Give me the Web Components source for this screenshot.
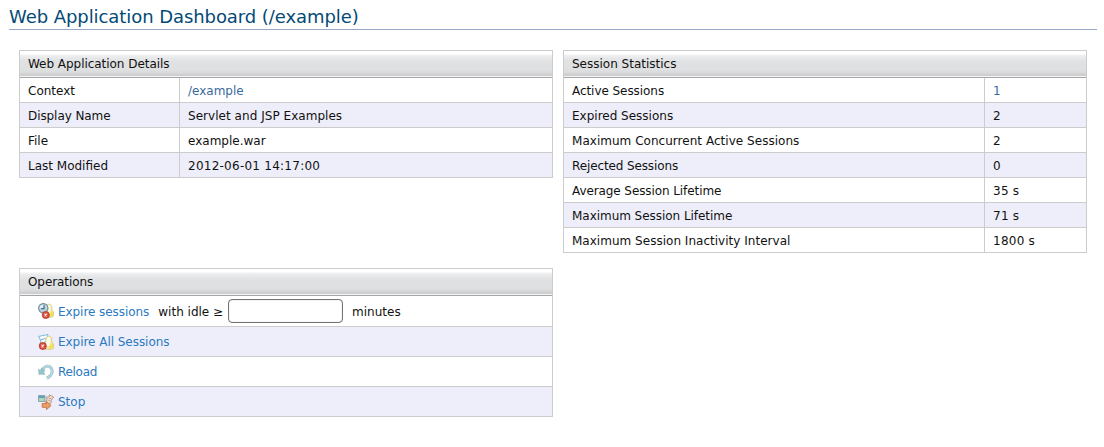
<!DOCTYPE html>
<html lang="en">
<head>
<meta charset="utf-8">
<title>Web Application Dashboard</title>
<style>
body{margin:0;background:#fff;color:#111;font:12px/16px "DejaVu Sans",sans-serif}
</style>
</head>
<body>
<dash-page heading="Web Application Dashboard (/example)">
  <dash-panel slot="details" heading="Web Application Details" style="--head-track:-.04px">
    <dash-row label="Context"><dash-link quiet>/example</dash-link></dash-row>
    <dash-row label="Display Name" style="--label-track:-.08px;--value-track:.04px">Servlet and JSP Examples</dash-row>
    <dash-row label="File">example.war</dash-row>
    <dash-row label="Last Modified" style="--value-track:.25px">2012-06-01 14:17:00</dash-row>
  </dash-panel>
  <dash-panel slot="stats" heading="Session Statistics" style="--label:421px">
    <dash-row label="Active Sessions" style="--label-track:-.06px"><dash-link quiet>1</dash-link></dash-row>
    <dash-row label="Expired Sessions">2</dash-row>
    <dash-row label="Maximum Concurrent Active Sessions" style="--label-track:.03px">2</dash-row>
    <dash-row label="Rejected Sessions" style="--label-track:-.12px">0</dash-row>
    <dash-row label="Average Session Lifetime" style="--label-track:-.09px;--value-track:.25px">35 s</dash-row>
    <dash-row label="Maximum Session Lifetime" style="--label-track:-.04px;--value-track:.25px">71 s</dash-row>
    <dash-row label="Maximum Session Inactivity Interval" style="--label-track:.02px;--value-track:.25px">1800 s</dash-row>
  </dash-panel>
  <dash-panel slot="ops" heading="Operations" style="--head-track:-.08px">
    <dash-op icon="clock" tall><dash-link style="letter-spacing:-.06px">Expire sessions</dash-link><dash-idle></dash-idle></dash-op>
    <dash-op icon="users"><dash-link style="letter-spacing:-.04px">Expire All Sessions</dash-link></dash-op>
    <dash-op icon="reload"><dash-link style="letter-spacing:-.3px">Reload</dash-link></dash-op>
    <dash-op icon="stop"><dash-link>Stop</dash-link></dash-op>
  </dash-panel>
</dash-page>
<script>
const attach = (el, html) => { el.attachShadow({mode:'open'}).innerHTML = html; };

customElements.define('dash-page', class extends HTMLElement {
  connectedCallback(){
    attach(this, `<style>
      :host{display:block;padding:4px 7px 0 9px}
      h1{margin:0;height:25px;font:18px/25px "DejaVu Sans",sans-serif;letter-spacing:-.07px;color:#044a75;border-bottom:1px solid #99a8c9;white-space:nowrap}
      .grid{display:grid;grid-template-columns:534px 524px;column-gap:10px;row-gap:15px;padding:20px 10px 0;align-items:start}
    </style><h1>${this.getAttribute('heading')}</h1>
    <div class="grid"><slot name="details"></slot><slot name="stats"></slot><slot name="ops"></slot></div>`);
  }
});

customElements.define('dash-panel', class extends HTMLElement {
  connectedCallback(){
    attach(this, `<style>
      :host{display:block;box-sizing:border-box;border:1px solid #ccc;border-bottom:0}
      header{box-sizing:border-box;height:27px;padding:5px 8px 0;border-bottom:1px solid #a6a6a8;letter-spacing:var(--head-track,0);
        background:linear-gradient(#fff 0,#fff 3px,#f1f1f2 4px,#e7e8e9 7px,#e0e1e3 11px,#dfe0e2 19px,#d8d9da 22px,#cecfd0 23.5px,#cfcfd0 25px,#f4f4f4 25px,#f4f4f4 26px)}
    </style><header>${this.getAttribute('heading')}</header><slot></slot>`);
  }
});

customElements.define('dash-row', class extends HTMLElement {
  connectedCallback(){
    attach(this, `<style>
      :host{display:grid;grid-template-columns:var(--label,160px) 1fr;height:24px;border-bottom:1px solid #ccc;line-height:26px}
      :host(:nth-child(even)){background:#eeeefa}
      span{box-sizing:border-box;height:24px;padding-left:8px;white-space:nowrap;letter-spacing:var(--value-track,0)}
      .label{border-right:1px solid #ccc;letter-spacing:var(--label-track,0)}
    </style><span class="label">${this.getAttribute('label')}</span><span><slot></slot></span>`);
  }
});

customElements.define('dash-link', class extends HTMLElement {
  connectedCallback(){
    attach(this, `<style>
      :host{display:inline;color:#2a7ac0;cursor:pointer}
      :host([quiet]){color:#3a6a9e}
    </style><slot></slot>`);
  }
});

customElements.define('dash-idle', class extends HTMLElement {
  connectedCallback(){
    attach(this, `<style>
      :host{display:flex;align-items:center;margin-left:9px;padding-top:2px}
      input{box-sizing:border-box;width:115px;height:24px;margin:-2px 9px 0 5px;padding:2px 4px;border:1px solid #73736f;border-radius:4px;background:#fff;font:inherit;box-shadow:inset 0 0 1px #999}
    </style><span>with idle ≥</span><input type="text" aria-label="Idle minutes"><span>minutes</span>`);
  }
});

const person = `
  <path d="M8 4.200C8.500 1.800 9.900 1 11.300 1.300c2 .3 2.700 1.900 2.500 4.200-.1 1.200.2 1.700 1 2.600.9 1 1.200 2.700.9 4.900-1.400 1.600-5.800 2-8.700.8z" fill="#f6eda0" stroke="#cfc47c" stroke-width=".8"/>
  <path d="M8.600 4.500C9 2.600 10.100 1.900 11.200 2.100c1.300.3 1.700 1.800 1.200 3.900L11 11H8z" fill="#fffef0"/>
  <path d="M13.800 8.300c1.300 1 1.600 2.700 1.300 4.300-1.200 1-3.400 1.200-5 .9z" fill="#f1de5c"/>`;
const badge = (x) => `
  <circle cx="${x}" cy="12" r="3.600" fill="#d94c3b" stroke="#ab382b" stroke-width=".7"/>
  <path d="M${x-1.3} 10.700l2.600 2.600m0-2.600l-2.600 2.600" stroke="#fff0ea" stroke-width="1.100"/>`;
const icons = {
  clock: `${person}<circle cx="5.300" cy="5.300" r="4.700" fill="#b9d2de" stroke="#718b98" stroke-width="1.100"/>
    <path d="M1.800 5.200a3.500 3.500 0 0 1 3.500-3.500v3.500z" fill="#e4f1f7"/>
    <path d="M6 2.200v3.500H3" fill="none" stroke="#4f7080" stroke-width="1.200"/>${badge(7.8)}`,
  users: `<path d="M.7 2.400L9.900.5l-1 4.700-5.500 7.700-2-.6 1.500-5.200z" fill="#f6fcff" stroke="#7fb8d4" stroke-width="1"/>
    <path d="M2.800 5.800l4.900-1.400" stroke="#76b1ce" stroke-width="1"/>
    <g transform="translate(0 .9)">${person}</g>${badge(4.8)}`,
  reload: `<path d="M4.200 6C6 3 9 1.300 11.200 2.500c3.600 1.900 3.900 6.600 1 9.400-1 1-2.200 1.700-3.400 2.100" fill="none" stroke="#93b9c3" stroke-width="2.900"/>
    <path d="M4.200 6C6 3 9 1.300 11.200 2.500c3.600 1.900 3.900 6.600 1 9.400-1 1-2.200 1.700-3.400 2.100" fill="none" stroke="#b4d6de" stroke-width="2"/>
    <path d="M.4 5L.9 10.500l6.400-.2-1.500-1.900 1.200-2.200L3.600 4 2.200 6.200z" fill="#92c4c8" stroke="#84b5ba" stroke-width=".4"/>`,
  stop: `<path d="M.5 1.500h6.500v6H.5z" fill="#a9cbd6" stroke="#7d9fac" stroke-width=".9"/>
    <path d="M1 2h5.500v2H1z" fill="#62a0b4"/><path d="M1.200 4.300h4.500v2.800H1.200z" fill="#b0dab4"/>
    <path d="M8.300 3.200l3-.5V.8L15.700 3l-2.500 3.200v2.500L10.500 10 7.500 8.500l1.600-2.700z" fill="#f2ddcf" stroke="#b08f7a" stroke-width=".9"/>
    <path d="M4.200 9.500h4.200V7.300l4.700 4.200-4.700 4.200v-2.400H4.200z" fill="#ee9d63" stroke="#bd744a" stroke-width=".9"/>
    <path d="M11 4.500l2.200.2M10.400 6.200l1.800.8" stroke="#c29781"/>`
};

customElements.define('dash-op', class extends HTMLElement {
  connectedCallback(){
    attach(this, `<style>
      :host{display:flex;align-items:center;height:29px;padding:0 0 0 18px;border-bottom:1px solid #ccc;white-space:nowrap;line-height:18px}
      :host([tall]){height:30px}
      :host(:nth-child(even)){background:#eeeefa}
      svg{align-self:flex-start;width:16px;height:16px;margin:7px 4px 0 0;flex:none}
      ::slotted(dash-link){padding-top:1px}
    </style><svg viewBox="0 0 16 16" aria-hidden="true">${icons[this.getAttribute('icon')]}</svg><slot></slot>`);
  }
});
</script>
</body>
</html>
